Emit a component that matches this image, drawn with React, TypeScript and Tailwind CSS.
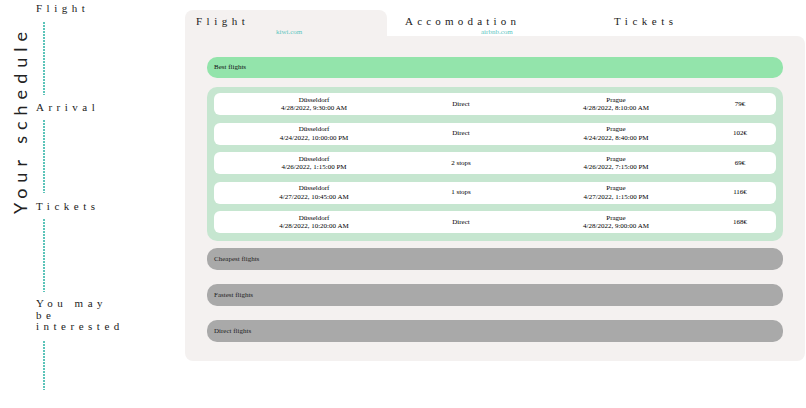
import React from 'react';

const flights = [
    { from: 'Düsseldorf', dep: '4/28/2022, 9:30:00 AM', stops: 'Direct', to: 'Prague', arr: '4/28/2022, 8:10:00 AM', price: '79€' },
    { from: 'Düsseldorf', dep: '4/24/2022, 10:00:00 PM', stops: 'Direct', to: 'Prague', arr: '4/24/2022, 8:40:00 PM', price: '102€' },
    { from: 'Düsseldorf', dep: '4/26/2022, 1:15:00 PM', stops: '2 stops', to: 'Prague', arr: '4/26/2022, 7:15:00 PM', price: '69€' },
    { from: 'Düsseldorf', dep: '4/27/2022, 10:45:00 AM', stops: '1 stops', to: 'Prague', arr: '4/27/2022, 1:15:00 PM', price: '116€' },
    { from: 'Düsseldorf', dep: '4/28/2022, 10:20:00 AM', stops: 'Direct', to: 'Prague', arr: '4/28/2022, 9:00:00 AM', price: '168€' },
];

const Dots = ({ h }: { h: string }) => (
    <div className={`ml-[7px] w-[2px] ${h} bg-[linear-gradient(#5cc4b9_55%,transparent_55%)] bg-[length:2px_3px]`} />
);

const Sidebar = () => (
    <div className="flex w-[185px] shrink-0">
        <div className="w-[36px] pl-[10px] pt-[26px]">
            <div className="[writing-mode:vertical-rl] rotate-180 font-['Lato',sans-serif] text-[18px] tracking-[6px] leading-[20px] text-[#222]">
                Your schedule
            </div>
        </div>
        <div className="flex flex-col font-['Liberation_Serif',serif] text-[11px] tracking-[4.5px] leading-[13px] text-[#222]">
            <div className="mt-[2px]">Flight</div>
            <div className="mt-[7px]"><Dots h="h-[73px]" /></div>
            <div className="mt-[6px]">Arrival</div>
            <div className="mt-[6px]"><Dots h="h-[73px]" /></div>
            <div className="mt-[7px]">Tickets</div>
            <div className="mt-[6px]"><Dots h="h-[73px]" /></div>
            <div className="mt-[6px] leading-[11.5px]">
                You may
                <br />
                be
                <br />
                interested
            </div>
            <div className="mt-[8px]"><Dots h="h-[49px]" /></div>
        </div>
    </div>
);

const Bar = ({ label, className }: { label: string; className: string }) => (
    <div className={`flex h-[22px] items-center rounded-[10px] pl-[7px] text-[7px] ${className}`}>{label}</div>
);

export default function App() {
    return (
        <div className="flex h-[408px] w-[806px] bg-white font-['Liberation_Serif',serif]">
            <Sidebar />
            <div className="mt-[10px] w-[620px]">
                {/* Tabs */}
                <div className="grid h-[26px] grid-cols-[202px_207px_1fr] text-[#222]">
                    <div className="rounded-t-lg bg-[#f4f1f0] pl-[11px] pt-[5px]">
                        <div className="text-[11px] leading-[13px] tracking-[4.5px]">Flight</div>
                        <div className="ml-[80px] text-[7px] leading-[8px] text-[#5cc6bf]">kiwi.com</div>
                    </div>
                    <div className="pl-[18px] pt-[5px]">
                        <div className="text-[11px] leading-[13px] tracking-[4.2px]">Accomodation</div>
                        <div className="ml-[76px] text-[7px] leading-[8px] text-[#5cc6bf]">airbnb.com</div>
                    </div>
                    <div className="pl-[20px] pt-[5px]">
                        <div className="text-[11px] leading-[13px] tracking-[4.5px]">Tickets</div>
                    </div>
                </div>

                {/* Panel */}
                <div className="rounded-b-lg rounded-tr-lg bg-[#f4f1f0] px-[22px] pb-[19px] pt-[21px] text-[#111]">
                    <div className="flex h-[21px] items-center rounded-[10px] bg-[#93e4ab] pl-[7px] text-[7px]">Best flights</div>
                    <div className="mt-[9px] flex flex-col gap-[7.5px] rounded-[10px] bg-[#c6e6d0] px-[7px] pb-[8px] pt-[6px]">
                        {flights.map((f, i) => (
                            <div key={i} className="grid h-[22px] grid-cols-[200px_94px_216px_32px] items-center rounded-[6px] bg-white text-center text-[7px] leading-[8.5px] text-black">
                                <div>
                                    <div>{f.from}</div>
                                    <div>{f.dep}</div>
                                </div>
                                <div>{f.stops}</div>
                                <div>
                                    <div>{f.to}</div>
                                    <div>{f.arr}</div>
                                </div>
                                <div>{f.price}</div>
                            </div>
                        ))}
                    </div>
                    <div className="mt-[7px]"><Bar label="Cheapest flights" className="bg-[#a9a9a9] text-[#222]" /></div>
                    <div className="mt-[14px]"><Bar label="Fastest flights" className="bg-[#a9a9a9] text-[#222]" /></div>
                    <div className="mt-[14px]"><Bar label="Direct flights" className="bg-[#a9a9a9] text-[#222]" /></div>
                </div>
            </div>
        </div>
    );
}
